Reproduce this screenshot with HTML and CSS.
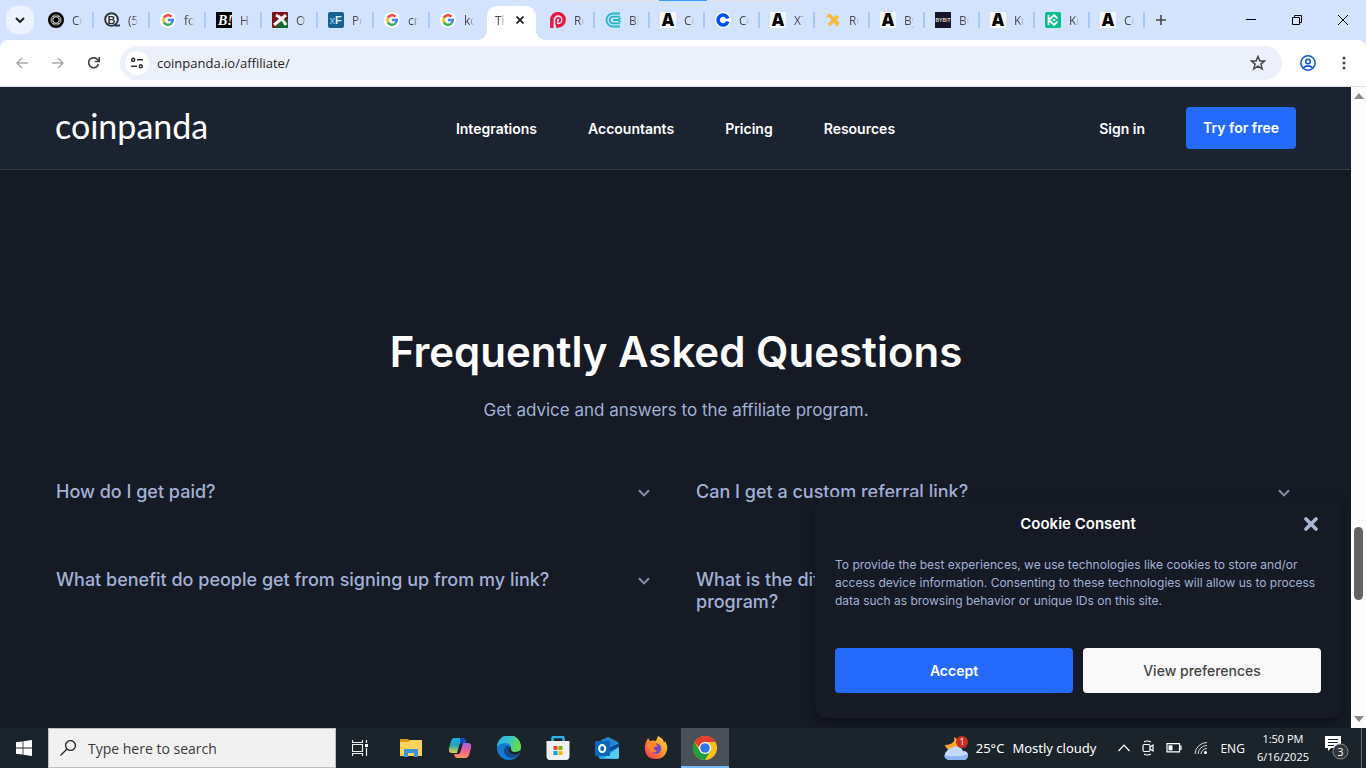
FILE: index.html
```
<!DOCTYPE html>
<html lang="en">
<head>
    <meta charset="UTF-8">
    <meta name="viewport" content="width=device-width, initial-scale=1.0">
    <title>The Coinpanda Affiliate Program</title>
    <link rel="stylesheet" href="styles.css">
</head>
<body>

    <!-- shared icons -->
    <svg class="defs" width="0" height="0">
        <symbol id="google" viewBox="0 0 16 16">
            <circle cx="8" cy="8" r="8" fill="#fff"/>
            <g fill="none" stroke-width="2.4">
                <path d="M3.9 5.6A4.8 4.8 0 0 1 11.5 4.7" stroke="#ea4335"/>
                <path d="M3.9 10.4A4.8 4.8 0 0 1 3.9 5.6" stroke="#fbbc05"/>
                <path d="M3.9 10.4A4.8 4.8 0 0 0 11.2 11.6" stroke="#34a853"/>
                <path d="M8 8H12.8A4.8 4.8 0 0 1 11.2 11.6" stroke="#4285f4"/>
            </g>
        </symbol>
        <symbol id="letter-a" viewBox="0 0 16 16">
            <rect width="16" height="16" fill="#f8f8f8"/>
            <text x="8" y="14" text-anchor="middle" font-family="Open Sans, sans-serif" font-size="17" font-weight="800">A</text>
        </symbol>
        <symbol id="chevron" viewBox="0 0 12 8">
            <path d="M1 1.2L6 6.4L11 1.2" fill="none" stroke="#8792a8" stroke-width="2"/>
        </symbol>
    </svg>

    <div class="tabbar">
        <button class="tab-search" aria-label="Search tabs"><svg width="10" height="6" viewBox="0 0 10 6"><path d="M1 1L5 5L9 1" fill="none" stroke="#1f1f1f" stroke-width="2"/></svg></button>
        <div class="tabs">
            <div class="tab"><svg viewBox="0 0 16 16"><circle cx="8" cy="8" r="8"/><g fill="none" stroke="#ccc" stroke-width=".8"><rect x="5.200" y="2.800" width="5.600" height="10.400" rx="2.800"/><rect x="5.200" y="2.800" width="5.600" height="10.400" rx="2.800" transform="rotate(60 8 8)"/><rect x="5.200" y="2.800" width="5.600" height="10.400" rx="2.800" transform="rotate(120 8 8)"/></g></svg><span>Co</span></div>
            <div class="tab"><svg viewBox="0 0 16 16"><circle cx="7.5" cy="7.5" r="6.3" fill="#fff" stroke="#2c3546" stroke-width="2"/><path d="M11 13.500H16" stroke="#2c3546" stroke-width="2"/><text x="7.5" y="11.5" text-anchor="middle" font-family="Liberation Sans, sans-serif" font-size="11" font-weight="700" fill="#2c3546">B</text></svg><span>(5)</span></div>
            <div class="tab"><svg><use href="#google"/></svg><span>fo</span></div>
            <div class="tab"><svg viewBox="0 0 16 16"><rect width="16" height="16"/><text x="2" y="13" font-family="Liberation Serif, serif" font-size="14" font-weight="700" font-style="italic" fill="#fff">B!</text></svg><span>Ho</span></div>
            <div class="tab"><svg viewBox="0 0 16 16"><rect width="16" height="16" rx="1" fill="#7d1018"/><path d="M16 7V16H3L9 9Z" fill="#146a28"/><path d="M4 3Q10 6 14 13M14 3L2 13" stroke="#fff" stroke-width="3" fill="none"/></svg><span>O1</span></div>
            <div class="tab"><svg viewBox="0 0 16 16"><rect width="16" height="16" rx="2" fill="#176093"/><text x="1.5" y="12" font-family="Liberation Sans, sans-serif" font-size="11" fill="#9ed0ed">x<tspan font-weight="700" fill="#d8f0fc">F</tspan></text></svg><span>Po</span></div>
            <div class="tab"><svg><use href="#google"/></svg><span>cry</span></div>
            <div class="tab last"><svg><use href="#google"/></svg><span>ko</span></div>
        </div>
        <div class="tab-active"><span>Th</span><button aria-label="Close tab"><svg width="8" height="8" viewBox="0 0 8 8"><path d="M.5.5L7.5 7.5M7.5.5L.5 7.5" stroke="#1f1f1f" stroke-width="1.7"/></svg></button></div>
        <div class="tabs narrow">
            <div class="tab"><svg viewBox="0 0 16 16"><path d="M1.8 16V8A6.2 6.2 0 1 1 8 14H6" fill="none" stroke="#e5193b" stroke-width="3.4"/><path d="M6.2 13V7.8A2 2 0 1 1 8.2 9.8" fill="none" stroke="#e5193b" stroke-width="1.8"/></svg><span>Re</span></div>
            <div class="tab"><svg viewBox="0 0 16 16"><g fill="none" stroke="#25b8c8" stroke-width="1.8"><path d="M15 1.5H8A6.5 6.5 0 0 0 8 14.5H15"/><path d="M15 4.6H8A3.4 3.4 0 0 0 8 11.4H15"/><path d="M8 8H13L15.500 6M13 8L15.500 10"/></g></svg><span>Bit</span></div>
            <div class="tab"><svg><use href="#letter-a"/></svg><span>Co</span></div>
            <div class="tab"><svg viewBox="0 0 16 16"><circle cx="8" cy="8" r="8" fill="#fff"/><path d="M12.800 6.500A5 5 0 1 0 12.800 9.500" fill="none" stroke="#0052ff" stroke-width="3.600"/></svg><span>Co</span></div>
            <div class="tab"><svg><use href="#letter-a"/></svg><span>XT</span></div>
            <div class="tab"><svg viewBox="0 0 16 16"><path d="M4 3L13 12M13 4L4 13" stroke="#fbb93a" stroke-width="3.600"/><path d="M2 5L5 2M11 14L14 11" stroke="#fbb93a" stroke-width="2"/></svg><span>Re</span></div>
            <div class="tab"><svg><use href="#letter-a"/></svg><span>By</span></div>
            <div class="tab"><svg viewBox="0 0 16 16"><rect width="16" height="16" fill="#14172b"/><text x="8" y="10" text-anchor="middle" font-family="Liberation Sans, sans-serif" font-size="5" font-weight="700" fill="#ddd">BYB<tspan fill="#f7a600">I</tspan>T</text></svg><span>Bu</span></div>
            <div class="tab"><svg><use href="#letter-a"/></svg><span>Ku</span></div>
            <div class="tab"><svg viewBox="0 0 16 16"><rect width="16" height="16" rx="2" fill="#01bc8d"/><path d="M3.500 3V13M4 8L9 3L12.500 6.500M4 8L9 13L12.500 9.500" fill="none" stroke="#fff" stroke-width="1.800"/><path d="M9 6.500L10.500 8L9 9.500L7.500 8Z" fill="#fff"/></svg><span>Ku</span></div>
            <div class="tab"><svg><use href="#letter-a"/></svg><span>Co</span></div>
        </div>
        <button class="new-tab" aria-label="New tab"><svg width="10" height="10" viewBox="0 0 10 10"><path d="M5 0V10M0 5H10" stroke="#474747" stroke-width="1.6"/></svg></button>
        <div class="window-buttons">
            <button aria-label="Minimize"><svg viewBox="0 0 10 10"><path d="M0 4.500H10" stroke="#000"/></svg></button>
            <button aria-label="Restore"><svg viewBox="0 0 10 10"><path d="M.5 2.500H7.500V9.500H.500ZM2.500 2.500V.500H9.500V7.500H7.500" fill="none" stroke="#000"/></svg></button>
            <button aria-label="Close"><svg viewBox="0 0 10 10"><path d="M0 0L10 10M10 0L0 10" stroke="#000"/></svg></button>
        </div>
        <div class="share-strip"><div></div></div>
    </div>

    <div class="toolbar">
        <button aria-label="Back"><svg width="12" height="12" viewBox="0 0 12 12"><path d="M12 6H1M6 1L1 6L6 11" fill="none" stroke="#a9abaf" stroke-width="1.500"/></svg></button>
        <button aria-label="Forward"><svg width="12" height="12" viewBox="0 0 12 12"><path d="M0 6H11M6 1L11 6L6 11" fill="none" stroke="#a9abaf" stroke-width="1.500"/></svg></button>
        <button aria-label="Reload"><svg width="12" height="12" viewBox="0 0 12 12"><path d="M10.500 7A5 5 0 1 1 9.500 2.500L11 4" fill="none" stroke="#3c4043" stroke-width="1.600"/><path d="M11.200 0V4.500H6.800" fill="none" stroke="#3c4043" stroke-width="1.600"/></svg></button>
        <div class="omnibox">
            <button class="site-info" aria-label="Site information"><svg width="12" height="12" viewBox="0 0 12 12"><g fill="none" stroke="#333" stroke-width="1.500"><circle cx="2.200" cy="2.800" r="1.500"/><path d="M6 2.800H12M0 9.200H6"/><circle cx="9.800" cy="9.200" r="1.500"/></g></svg></button>
            <input type="text" value="coinpanda.io/affiliate/" aria-label="Address">
            <button class="star" aria-label="Bookmark"><svg width="16" height="16" viewBox="0 0 16 16"><path d="M8 1.500L9.900 6H14.600L10.900 9.100L12.200 13.800L8 11.200L3.800 13.800L5.100 9.100L1.400 6H6.100Z" fill="none" stroke="#474747" stroke-width="1.500"/></svg></button>
        </div>
        <button class="profile" aria-label="Profile"><svg width="16" height="16" viewBox="0 0 16 16"><g fill="none" stroke="#0b57d0" stroke-width="1.500"><circle cx="8" cy="8" r="7.200"/><circle cx="8" cy="6.500" r="2.300"/><path d="M3 13Q8 8.800 13 13"/></g></svg></button>
        <button aria-label="Menu"><svg width="4" height="14" viewBox="0 0 4 14"><g fill="#474747"><circle cx="2" cy="2" r="1.500"/><circle cx="2" cy="7" r="1.500"/><circle cx="2" cy="12" r="1.500"/></g></svg></button>
    </div>

    <div class="viewport">
        <div class="page">
            <header>
                <a class="logo" href="#">coinpanda</a>
                <nav>
                    <a href="#">Integrations</a>
                    <a href="#">Accountants</a>
                    <a href="#">Pricing</a>
                    <a href="#">Resources</a>
                </nav>
                <div class="account">
                    <a href="#">Sign in</a>
                    <a class="try" href="#">Try for free</a>
                </div>
            </header>

            <main>
                <h1>Frequently Asked Questions</h1>
                <p class="sub">Get advice and answers to the affiliate program.</p>
                <div class="faq">
                    <button>How do I get paid?<svg><use href="#chevron"/></svg></button>
                    <button>Can I get a custom referral link?<svg><use href="#chevron"/></svg></button>
                    <button>What benefit do people get from signing up from my link?<svg><use href="#chevron"/></svg></button>
                    <button>What is the difference between an affiliate and a referral program?<svg><use href="#chevron"/></svg></button>
                </div>
            </main>

            <div class="cookie" role="dialog" aria-labelledby="cookie-title">
                <h2 id="cookie-title">Cookie Consent</h2>
                <button class="close" aria-label="Close"><svg width="14" height="14" viewBox="0 0 14 14"><path d="M2 2L12 12M12 2L2 12" stroke="#a9b5d3" stroke-width="3.600" stroke-linecap="round"/></svg></button>
                <p>To provide the best experiences, we use technologies like cookies to store and/or access device information. Consenting to these technologies will allow us to process data such as browsing behavior or unique IDs on this site.</p>
                <div class="choices">
                    <button class="accept">Accept</button>
                    <button class="prefs">View preferences</button>
                </div>
            </div>
        </div>
        <div class="scrollbar">
            <svg width="10" height="6" viewBox="0 0 10 6"><path d="M5 0L10 6H0Z" fill="#8a8a8a"/></svg>
            <div class="track"><div class="thumb"></div></div>
            <svg width="10" height="6" viewBox="0 0 10 6"><path d="M5 6L10 0H0Z" fill="#8a8a8a"/></svg>
        </div>
    </div>

    <div class="taskbar">
        <button class="start" aria-label="Start"><svg width="16" height="16" viewBox="0 0 16 16"><path d="M0 2.300L6.600 1.400V7.600H0ZM7.400 1.200L16 0V7.600H7.400ZM0 8.400H6.600V14.600L0 13.700ZM7.400 8.400H16V16L7.400 14.800Z" fill="#fff"/></svg></button>
        <label class="search">
            <svg width="16" height="16" viewBox="0 0 16 16"><circle cx="10.500" cy="5.500" r="4.900" fill="none" stroke="#222" stroke-width="1.300"/><path d="M7 9L.5 15.500" stroke="#222" stroke-width="1.300"/></svg>
            <input type="text" placeholder="Type here to search" aria-label="Search">
        </label>
        <button class="start" aria-label="Task view"><svg width="16" height="16" viewBox="0 0 16 16"><path d="M.5 0V2.500H10.500V0M.500 16V13.500H10.500V16M.500 4.500H10.500V11.500H.500ZM14.500 0V3M14.500 8V16" fill="none" stroke="#eee" stroke-width="1.200"/><rect x="13" y="4" width="3" height="3" fill="#fff"/></svg></button>
        <div class="apps">
            <button aria-label="File Explorer"><svg viewBox="0 0 24 24"><path d="M1 3H9L11 5V8H1Z" fill="#dd9b0d"/><path d="M1 6H9L11 4H23V20H1Z" fill="#ffd35c"/><path d="M5 21V13H19V21H15V17H9V21Z" fill="#3994dc"/></svg></button>
            <button aria-label="Copilot">
                <svg viewBox="0 0 24 24">
                    <defs>
                        <linearGradient id="cp1" x1="0" y1="0" x2="0" y2="1"><stop offset="0" stop-color="#1ba9ee"/><stop offset=".5" stop-color="#2ba3b4"/><stop offset="1" stop-color="#e9d13d"/></linearGradient>
                        <linearGradient id="cp2" x1="0" y1="0" x2="0" y2="1"><stop offset="0" stop-color="#a264ea"/><stop offset=".5" stop-color="#ee5c91"/><stop offset="1" stop-color="#fb9a58"/></linearGradient>
                    </defs>
                    <path d="M6 2H15Q17 2 18 6H14Q12 6 11 10L9 17H4Q0 17 1 12L3 5Q4 2 6 2Z" fill="url(#cp1)"/>
                    <path d="M18 22H9Q7 22 6 18H10Q12 18 13 14L15 7H20Q24 7 23 12L21 19Q20 22 18 22Z" fill="url(#cp2)"/>
                    <path d="M12 2H15Q17 2 18 7H14Q13 7 12 9Z" fill="#1648bd"/>
                </svg>
            </button>
            <button aria-label="Edge">
                <svg viewBox="0 0 24 24">
                    <defs><linearGradient id="eg" x1="0" y1="0" x2="1" y2=".3"><stop offset="0" stop-color="#2aa9e8"/><stop offset=".5" stop-color="#34c4cf"/><stop offset="1" stop-color="#68da51"/></linearGradient></defs>
                    <circle cx="12" cy="12" r="12" fill="#137bd0"/>
                    <path d="M0 11A12 12 0 0 1 24 11Q24 16 18 16Q13 16 14 13Q15 8 9 7Q3 7 0 11Z" fill="url(#eg)"/>
                    <path d="M9 10Q4 17 11 21Q17 24 22 18Q17 20 13 17Q11 15 13 11Q12 9 9 10Z" fill="#154a8b"/>
                    <path d="M14 11Q13 16 18 16Q21 16 24 14L22 18Q17 20 13 17Q11 15 12 12Z" fill="#1c242c"/>
                </svg>
            </button>
            <button aria-label="Microsoft Store"><svg viewBox="0 0 24 24"><path d="M6.500 6V2.200Q6.500 1 8 1H16Q17.500 1 17.500 2.200V6" fill="none" stroke="#31b0e4" stroke-width="2.500"/><path d="M.500 5H23.500V20Q23.500 24 20 24H4Q.500 24 .500 20Z" fill="#f0f0f0"/><path d="M7.500 10H11.500V14H7.500Z" fill="#e64c25"/><path d="M12.500 10H16.500V14H12.500Z" fill="#7ab800"/><path d="M7.500 15H11.500V19H7.500Z" fill="#10a2e8"/><path d="M12.500 15H16.500V19H12.500Z" fill="#fbb800"/></svg></button>
            <button aria-label="Outlook"><svg viewBox="0 0 24 24"><path d="M3 8L13 1L24 7V21Q24 23 22 23H5L3 20Z" fill="#25a1e2"/><path d="M6 4L13 1L23 6L15 12L6 9Z" fill="#2584cd"/><path d="M12 13L24 7V11L14 16Z" fill="#0c4c95"/><path d="M9 22L24 11V21Q24 23 22 23Z" fill="#53cdf3"/><rect y="5" width="15" height="15" rx="1" fill="#0c65bd"/><ellipse cx="7.200" cy="12.500" rx="3" ry="3.600" fill="none" stroke="#fff" stroke-width="2"/></svg></button>
            <button aria-label="Firefox">
                <svg viewBox="0 0 24 24">
                    <defs><linearGradient id="ff" x1="1" y1="0" x2="0" y2="1"><stop offset="0" stop-color="#ffe545"/><stop offset=".45" stop-color="#ff9626"/><stop offset="1" stop-color="#f52465"/></linearGradient></defs>
                    <path d="M2 6L4 2L6 5Q9 4 12 5L14 0Q20 3 20 7L21 5Q24 10 23 14Q21 23 12 23Q2 23 1 14Q0 10 2 6Z" fill="url(#ff)"/>
                    <circle cx="12" cy="12.500" r="5.200" fill="#7744c6"/>
                    <path d="M3 9Q6 5 11 7L14 10Q12 11 10 11Q9 14 13 15Q10 18 6 15Z" fill="#ff8a25"/>
                </svg>
            </button>
            <button class="open" aria-label="Chrome"><svg viewBox="0 0 24 24"><circle cx="12" cy="12" r="12" fill="#fbc116"/><path d="M12 12H6.800L1.600 6A12 12 0 0 1 22.400 6H12Z" fill="#e33b2e"/><path d="M1.600 6A12 12 0 0 0 12 24L17.200 15L12 12L6.800 15Z" fill="#249a41"/><circle cx="12" cy="12" r="6" fill="#fff"/><circle cx="12" cy="12" r="4.800" fill="#3475e6"/></svg></button>
        </div>
        <div class="tray">
            <button class="weather">
                <svg width="24" height="24" viewBox="0 0 24 24">
                    <path d="M10 1Q12 8 1 9Q2 14 8 14L15 10L13 3Z" fill="#f8a72c"/>
                    <path d="M5 24A5 5 0 0 1 3 15Q4 12 8 12Q11 9 15 11Q18 12 19 15Q24 15 24 19Q24 24 19 24Z" fill="#c3dafa"/>
                    <path d="M5 24Q0 23 0 19Q4 21 9 20Q17 21 24 18Q24 24 19 24Z" fill="#8db3f2"/>
                    <circle cx="18" cy="6" r="6" fill="#c92c20"/>
                    <text x="18" y="9" text-anchor="middle" font-family="Open Sans, sans-serif" font-size="9" fill="#fff">1</text>
                </svg>
                <span>25°C</span><span>Mostly cloudy</span>
            </button>
            <svg width="12" height="8" viewBox="0 0 12 8"><path d="M.5 7L6 1.200L11.500 7" fill="none" stroke="#fff" stroke-width="1.200"/></svg>
            <svg width="12" height="16" viewBox="0 0 12 16"><g fill="none" stroke="#fff" stroke-width="1.200"><rect x="1" y="4.500" width="7" height="7" rx="1.500"/><path d="M8 7L11 5V11L8 9M2 2Q5 0 9 2M2 14Q5 16 9 14"/></g></svg>
            <svg width="16" height="10" viewBox="0 0 16 10"><path d="M1 .700H13.500V8.800H1ZM13.500 3H15V6.500H13.500" fill="none" stroke="#fff" stroke-width="1.200"/><rect x="2.500" y="2.300" width="4" height="5" fill="#fff"/></svg>
            <svg width="14" height="14" viewBox="0 0 14 14"><g fill="none" stroke="#ddd"><path d="M1 13A12 12 0 0 1 13 1.500M4 13A9 9 0 0 1 13 4.500M7 13A6 6 0 0 1 13 7.500"/></g><circle cx="11.500" cy="11.500" r="1.500" fill="#fff"/></svg>
            <span class="lang">ENG</span>
            <div class="clock"><span>1:50 PM</span><span>6/16/2025</span></div>
            <button class="notes" aria-label="Notifications"><svg width="24" height="26" viewBox="0 0 24 26"><path d="M0 1H16V13H6L3 16V13H0Z" fill="#fff"/><path d="M3 4.500H13M3 7.500H13M3 10.500H9" stroke="#1c242b" stroke-width="1.200"/><circle cx="15.500" cy="16.500" r="7.500" fill="#30363b" stroke="#888e92"/><text x="15.500" y="20.500" text-anchor="middle" font-family="Open Sans, sans-serif" font-size="11" fill="#fff">3</text></svg></button>
            <div class="show-desktop"></div>
        </div>
    </div>
</body>
</html>
```
FILE: styles.css
```
* {
    box-sizing: border-box;
}

body {
    margin: 0;
    height: 100vh;
    display: flex;
    flex-direction: column;
    overflow: hidden;
    background: #d3e3fd;
    font-family: "Open Sans", sans-serif;
}

button {
    border: none;
    padding: 0;
    background: none;
    font-family: inherit;
    color: inherit;
    cursor: pointer;
}

svg {
    display: block;
    flex: none;
}

a {
    color: white;
    text-decoration: none;
}

.defs {
    position: absolute;
}

/* tab strip */
.tabbar {
    position: relative;
    display: flex;
    align-items: center;
    height: 40px;
    padding-left: 6px;
    font-size: 12px;
    color: #474747;
}

.tab-search {
    width: 28px;
    height: 28px;
    margin-right: 4px;
    border-radius: 10px;
    background: #ecf2fe;
}

.tab-search svg, .new-tab svg {
    margin: auto;
}

.tabs {
    display: flex;
}

.tab {
    display: flex;
    align-items: center;
    width: 56px;
    height: 16px;
    padding-left: 10px;
    border-right: 2px solid #a8c7fa;
}

.tab.last {
    border-color: transparent;
}

.narrow .tab {
    width: 55px;
}

.tab svg {
    width: 16px;
    height: 16px;
    margin-right: 8px;
}

.tab span, .tab-active span {
    width: 10px;
    overflow: hidden;
    white-space: nowrap;
    -webkit-mask-image: linear-gradient(to right, black 50%, transparent);
    mask-image: linear-gradient(to right, black 50%, transparent);
}

.tab-active {
    position: relative;
    display: flex;
    align-items: center;
    align-self: flex-end;
    justify-content: space-between;
    width: 49px;
    height: 34px;
    margin: 0 4px 0 1px;
    padding: 0 12px 6px 8px;
    border-radius: 10px 10px 0 0;
    background: white;
}

.tab-active::before, .tab-active::after {
    content: "";
    position: absolute;
    bottom: 0;
    width: 10px;
    height: 10px;
}

.tab-active::before {
    right: 100%;
    background: radial-gradient(circle at 0 0, transparent 10px, white 10px);
}

.tab-active::after {
    left: 100%;
    background: radial-gradient(circle at 100% 0, transparent 10px, white 10px);
}

.new-tab {
    width: 28px;
    height: 28px;
    margin-left: 2px;
}

.window-buttons {
    display: flex;
    margin-left: auto;
}

.window-buttons button {
    width: 46px;
    height: 40px;
}

.window-buttons svg {
    width: 10px;
    height: 10px;
    margin: auto;
}

.share-strip {
    position: absolute;
    top: 0;
    left: 563px;
    width: 240px;
    height: 1px;
    background: #e3e3e3;
}

.share-strip div {
    width: 48px;
    height: 1px;
    margin-left: 96px;
    background: #3f9bff;
}

/* address bar */
.toolbar {
    display: flex;
    align-items: center;
    height: 47px;
    padding: 0 4px;
    border-bottom: 1px solid #dde1e6;
    border-radius: 8px 8px 0 0;
    background: white;
}

.toolbar > button {
    display: flex;
    align-items: center;
    justify-content: center;
    width: 36px;
    height: 34px;
}

.omnibox {
    flex: 1;
    display: flex;
    align-items: center;
    height: 34px;
    margin: 0 8px;
    padding: 0 16px 0 5px;
    border-radius: 17px;
    background: #ecf0fa;
}

.site-info {
    width: 24px;
    height: 24px;
    border-radius: 50%;
    background: white;
}

.site-info svg {
    margin: auto;
}

.omnibox input {
    flex: 1;
    border: none;
    padding: 0 8px;
    background: none;
    font-family: "Open Sans", sans-serif;
    font-size: 13px;
    color: #1f1f1f;
}

/* site */
.viewport {
    flex: 1;
    display: flex;
    min-height: 0;
}

.page {
    position: relative;
    flex: 1;
    overflow: hidden;
    background: #151a25;
    color: #a3b1d6;
    font-family: Inter, sans-serif;
}

header {
    display: grid;
    grid-template-columns: 1fr auto 1fr;
    align-items: center;
    height: 83px;
    padding: 0 55px;
    border-bottom: 1px solid #343c4a;
    background: #1c2330;
    font-size: 14px;
    font-weight: 600;
}

.logo {
    padding-bottom: 4px;
    font-family: Lato, sans-serif;
    font-size: 34px;
    font-weight: 400;
    line-height: 40px;
}

nav {
    display: flex;
    gap: 51px;
}

.account {
    display: flex;
    align-items: center;
    justify-content: flex-end;
    gap: 41px;
}

.try {
    padding: 0 17px;
    border-radius: 4px;
    background: #246bfd;
    line-height: 42px;
}

main {
    padding: 156px 55px 0 56px;
}

h1 {
    margin: 0;
    font-size: 42px;
    font-weight: 600;
    line-height: 52px;
    text-align: center;
    color: white;
}

.sub {
    margin: 20px 0 59px;
    font-size: 17px;
    line-height: 24px;
    text-align: center;
}

.faq {
    display: grid;
    grid-template-columns: 1fr 1fr;
    gap: 66px 40px;
}

.faq button {
    display: flex;
    align-items: flex-start;
    justify-content: space-between;
    gap: 40px;
    padding-right: 6px;
    font-size: 18px;
    font-weight: 500;
    line-height: 22px;
    text-align: left;
}

.faq svg {
    width: 12px;
    height: 8px;
    margin-top: 8px;
}

.cookie {
    position: absolute;
    right: 10px;
    bottom: 10px;
    width: 526px;
    padding: 16px 20px 25px;
    border-radius: 12px;
    background: #151a25;
    box-shadow: 0 4px 10px rgba(0,0,0,0.4);
    font-size: 12px;
    line-height: 18px;
}

.cookie h2 {
    margin: 0;
    font-size: 15px;
    font-weight: 600;
    line-height: 22px;
    text-align: center;
    color: white;
}

.cookie .close {
    position: absolute;
    top: 20px;
    right: 23px;
}

.cookie p {
    margin: 21px 0 38px;
}

.choices {
    display: flex;
    gap: 10px;
}

.choices button {
    flex: 1;
    height: 45px;
    border-radius: 4px;
    font-size: 14px;
    font-weight: 500;
}

.choices .accept {
    background: #246bfd;
    color: white;
    font-weight: 600;
}

.choices .prefs {
    background: #f9f9f9;
    color: #444;
}

.scrollbar {
    display: flex;
    flex-direction: column;
    align-items: center;
    width: 15px;
    padding: 6px 0;
    background: #fcfcfc;
}

.track {
    flex: 1;
    display: flex;
    flex-direction: column;
    justify-content: flex-end;
    padding-bottom: 116px;
}

.thumb {
    width: 9px;
    height: 73px;
    border-radius: 5px;
    background: #636363;
}

/* taskbar */
.taskbar {
    display: flex;
    height: 40px;
    background: #1c242b;
    color: white;
}

.start {
    width: 48px;
}

.start svg {
    margin: auto;
}

.search {
    display: flex;
    align-items: center;
    gap: 12px;
    width: 288px;
    padding-left: 11px;
    border: 1px solid #bfbfbf;
    background: #f1f1f1;
}

.search input {
    flex: 1;
    min-width: 0;
    border: none;
    padding: 0;
    background: none;
    font-family: "Open Sans", sans-serif;
    font-size: 14px;
}

.search input::placeholder {
    color: #3a3a3a;
}

.apps {
    display: flex;
    gap: 1px;
    margin-left: 3px;
}

.apps button {
    width: 48px;
}

.apps svg {
    width: 24px;
    height: 24px;
    margin: auto;
}

.apps .open {
    border-bottom: 2px solid #76b9ff;
    padding-top: 2px;
    background: #4a5057;
}

.tray {
    display: flex;
    align-items: center;
    gap: 12px;
    margin-left: auto;
}

.weather {
    display: flex;
    align-items: center;
    gap: 8px;
    margin-right: 10px;
    font-family: "Noto Sans", sans-serif;
    font-size: 13px;
}

.lang {
    font-size: 12px;
}

.clock {
    display: flex;
    flex-direction: column;
    align-items: center;
    font-size: 11px;
    line-height: 18px;
}

.notes {
    margin-left: 4px;
}

.show-desktop {
    width: 5px;
    height: 40px;
    border-left: 1px solid #6b7176;
}
```
